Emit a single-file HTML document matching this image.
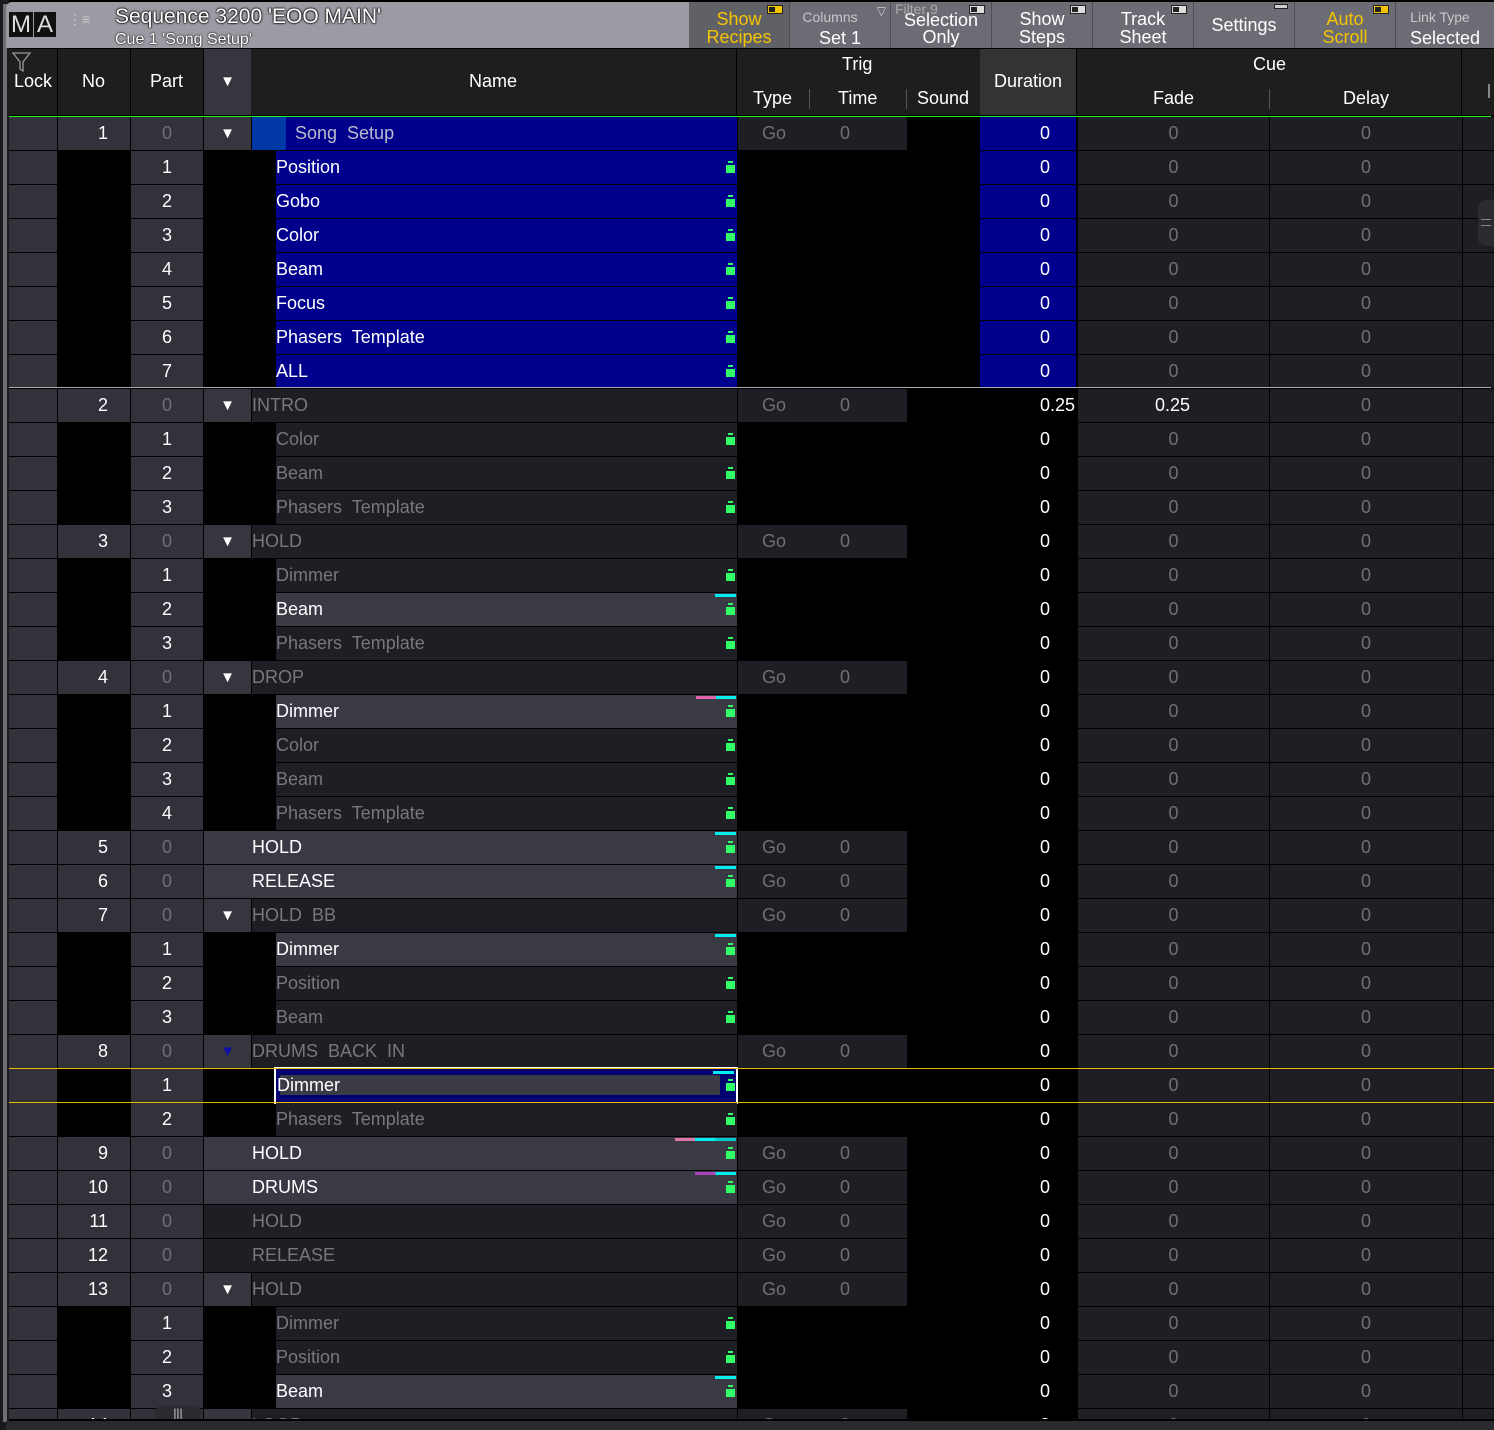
<!DOCTYPE html>
<html><head><meta charset="utf-8"><style>
*{margin:0;padding:0;box-sizing:border-box}
html{width:1494px;height:1430px;overflow:hidden;background:#000}
body{width:1494px;height:1430px;background:#000;position:relative;overflow:hidden;font-family:"Liberation Sans Narrow","Liberation Sans",sans-serif;font-size:18px;color:#fff}
.a{position:absolute}
.r{position:absolute;left:9px;width:1485px;height:33px;overflow:hidden}
.c{position:absolute;top:0;height:33px;line-height:33px;white-space:pre}
.lk{left:0;width:48px;background:#31323a}
.no{left:49px;width:72px;text-align:right;padding-right:22px}
.cu .no{background:#31323a}
.pt{left:122px;width:72px;background:#31323a;text-align:center}
.ar{left:195px;width:47px;text-align:center;background:#35363e;font-size:15px}
.nm{left:243px;width:485px;background:#1e1f24;color:#77787e}
.pn{left:267px;width:461px;background:#1e1f24;color:#77787e}
.nmw{left:195px;width:533px;padding-left:48px;background:#1e1f24;color:#77787e}
.h{background:#393a44!important;color:#fff!important}
.tg{left:729px;width:169px;background:#1e1f24;color:#6f7075}
.tg i{font-style:normal;position:absolute;top:0}
.du{left:971px;width:96px;text-align:right;padding-right:26px}
.bl{background:#00008c}
.fd{left:1069px;width:191px;background:#1e1f24;color:#6f7075;text-align:center}
.dl{left:1261px;width:192px;background:#1e1f24;color:#6f7075;text-align:center}
.rs{left:1454px;width:31px;background:#1e1f24}
.d{color:#6f7075}
.bt{position:absolute;right:2px;top:12px;width:9px;height:10px;background:#3f6;border-top:2px solid #1e1f24}
.bt:before{content:"";position:absolute;left:2px;top:-4px;width:5px;height:2px;background:#3f6}
.cy{position:absolute;right:1px;top:1px;width:21px;height:3px;background:#0ee}
.btn{position:absolute;top:2px;height:46px;background:#6c6d74;text-align:center;line-height:18px;font-size:18px;padding-top:8px}
.sm{font-size:14px;color:#c8c8cc}
.tog{position:absolute;right:6px;top:3px;width:16px;height:9px;border:1px solid #222;background:#ddd}
.tog:after{content:"";position:absolute;left:1px;top:1px;width:6px;height:5px;background:#222}
.hd{position:absolute;color:#fff;font-size:18px}
</style></head><body>
<div class="a" style="left:0;top:0;width:9px;height:1430px;background:#1a1a1e"></div>
<div class="a" style="left:3px;top:4px;width:4px;height:1418px;background:#6e6e75"></div>
<div class="a" style="left:6px;top:2px;width:683px;height:46px;background:#9b9ba3;border-radius:6px 0 0 0"></div>
<div class="a" style="left:9px;top:12px;width:24px;height:25px;background:#111;color:#ddd;font-size:24px;line-height:25px;text-align:center">M</div>
<div class="a" style="left:34px;top:12px;width:22px;height:25px;background:#111;color:#ddd;font-size:24px;line-height:25px;text-align:center">A</div>
<div class="a" style="left:68px;top:17px;color:#ccc;font-size:14px;line-height:5px">⋮≡</div>
<div class="a" style="left:115px;top:5px;font-size:21px;color:#fff;text-shadow:0 0 2px #000,0 0 2px #000,0 0 1px #000">Sequence 3200 'EOO MAIN'</div>
<div class="a" style="left:115px;top:31px;font-size:16px;color:#fff;text-shadow:0 0 2px #000,0 0 1px #000">Cue 1 'Song Setup'</div>
<div class="a" style="left:689px;top:2px;width:805px;height:46px;background:#4e4f55"></div>
<div class="btn" style="left:689px;width:100px;background:#606167;color:#f5c400"><div class="tog" style="background:#f5c400"></div>Show<br>Recipes</div>
<div class="btn" style="left:790px;width:100px;padding-top:5px"><span class="sm" style="margin-left:-20px">Columns</span><br><span style="line-height:24px">Set 1</span><span class="a" style="right:4px;top:0;font-size:12px;color:#ccc">▽</span></div>
<div class="btn" style="left:891px;width:100px;padding-top:10px;line-height:17px"><span class="a sm" style="left:4px;top:-1px;color:#aaa">Filter 9</span><div class="tog"></div>Selection<br>Only</div>
<div class="btn" style="left:992px;width:100px"><div class="tog"></div>Show<br>Steps</div>
<div class="btn" style="left:1093px;width:100px"><div class="tog"></div>Track<br>Sheet</div>
<div class="btn" style="left:1194px;width:100px;padding-top:14px">Settings<span class="a" style="right:6px;top:2px;width:14px;height:5px;border:1px solid #222;background:#ccc"></span></div>
<div class="btn" style="left:1295px;width:100px;color:#f5c400"><div class="tog" style="background:#f5c400"></div>Auto<br>Scroll</div>
<div class="btn" style="left:1396px;width:98px;padding-top:5px"><span class="sm" style="margin-left:-10px">Link Type</span><br><span style="line-height:24px">Selected</span></div>
<div class="a" style="left:9px;top:49px;width:1485px;height:66px;background:#1e1e1e"></div>
<div class="a" style="left:57px;top:49px;width:1px;height:66px;background:#000"></div>
<div class="a" style="left:130px;top:49px;width:1px;height:66px;background:#000"></div>
<div class="a" style="left:203px;top:49px;width:1px;height:66px;background:#000"></div>
<div class="a" style="left:204px;top:49px;width:47px;height:66px;background:#35363e;text-align:center;line-height:66px;font-size:15px">▼</div>
<div class="a" style="left:736px;top:49px;width:1px;height:66px;background:#000"></div>
<div class="a" style="left:980px;top:49px;width:96px;height:66px;background:#333"></div>
<div class="a" style="left:1076px;top:49px;width:1px;height:66px;background:#000"></div>
<div class="a" style="left:1461px;top:49px;width:1px;height:66px;background:#000"></div>
<svg class="a" style="left:11px;top:51px" width="22" height="22"><path d="M2 2 H19 L12 11 V20 L9 18 V11 Z" fill="none" stroke="#999" stroke-width="1.3"/></svg>
<div class="hd" style="left:14px;top:71px">Lock</div>
<div class="hd" style="left:82px;top:71px">No</div>
<div class="hd" style="left:150px;top:71px">Part</div>
<div class="hd" style="left:469px;top:71px">Name</div>
<div class="hd" style="left:842px;top:54px">Trig</div>
<div class="hd" style="left:753px;top:88px">Type</div>
<div class="hd" style="left:838px;top:88px">Time</div>
<div class="hd" style="left:917px;top:88px">Sound</div>
<div class="a" style="left:809px;top:89px;width:1px;height:20px;background:#555"></div>
<div class="a" style="left:906px;top:89px;width:1px;height:20px;background:#555"></div>
<div class="hd" style="left:994px;top:71px">Duration</div>
<div class="hd" style="left:1253px;top:54px">Cue</div>
<div class="hd" style="left:1153px;top:88px">Fade</div>
<div class="hd" style="left:1343px;top:88px">Delay</div>
<div class="a" style="left:1269px;top:89px;width:1px;height:20px;background:#555"></div>
<div class="a" style="left:1488px;top:84px;width:2px;height:14px;background:#888"></div>
<div class="a" style="left:9px;top:116px;width:1482px;height:1px;background:#2e2"></div>

<div class="r cu" style="top:117px"><div class="c lk"></div><div class="c no">1</div><div class="c pt d">0</div><div class="c ar">▼</div><div class="c nm" style="background:#00008c;color:#bbc;padding-left:43px"><span class="a" style="left:0;top:0;width:34px;height:33px;background:#0039a6"></span>Song  Setup</div><div class="c tg"><i style="left:24px">Go</i><i style="left:102px">0</i></div><div class="c du bl">0</div><div class="c fd">0</div><div class="c dl">0</div><div class="c rs"></div></div>
<div class="r" style="top:151px"><div class="c lk"></div><div class="c pt">1</div><div class="c pn" style="background:#00008c;color:#fff">Position<b class="bt" style="border-color:#00008c"></b></div><div class="c du bl">0</div><div class="c fd">0</div><div class="c dl">0</div><div class="c rs"></div></div>
<div class="r" style="top:185px"><div class="c lk"></div><div class="c pt">2</div><div class="c pn" style="background:#00008c;color:#fff">Gobo<b class="bt" style="border-color:#00008c"></b></div><div class="c du bl">0</div><div class="c fd">0</div><div class="c dl">0</div><div class="c rs"></div></div>
<div class="r" style="top:219px"><div class="c lk"></div><div class="c pt">3</div><div class="c pn" style="background:#00008c;color:#fff">Color<b class="bt" style="border-color:#00008c"></b></div><div class="c du bl">0</div><div class="c fd">0</div><div class="c dl">0</div><div class="c rs"></div></div>
<div class="r" style="top:253px"><div class="c lk"></div><div class="c pt">4</div><div class="c pn" style="background:#00008c;color:#fff">Beam<b class="bt" style="border-color:#00008c"></b></div><div class="c du bl">0</div><div class="c fd">0</div><div class="c dl">0</div><div class="c rs"></div></div>
<div class="r" style="top:287px"><div class="c lk"></div><div class="c pt">5</div><div class="c pn" style="background:#00008c;color:#fff">Focus<b class="bt" style="border-color:#00008c"></b></div><div class="c du bl">0</div><div class="c fd">0</div><div class="c dl">0</div><div class="c rs"></div></div>
<div class="r" style="top:321px"><div class="c lk"></div><div class="c pt">6</div><div class="c pn" style="background:#00008c;color:#fff">Phasers  Template<b class="bt" style="border-color:#00008c"></b></div><div class="c du bl">0</div><div class="c fd">0</div><div class="c dl">0</div><div class="c rs"></div></div>
<div class="r" style="top:355px"><div class="c lk"></div><div class="c pt">7</div><div class="c pn" style="background:#00008c;color:#fff">ALL<b class="bt" style="border-color:#00008c"></b></div><div class="c du bl">0</div><div class="c fd">0</div><div class="c dl">0</div><div class="c rs"></div></div>
<div class="a" style="left:9px;top:387px;width:1482px;height:1px;background:#aaa"></div>

<div class="r cu" style="top:389px"><div class="c lk"></div><div class="c no">2</div><div class="c pt d">0</div><div class="c ar">▼</div><div class="c nm">INTRO</div><div class="c tg"><i style="left:24px">Go</i><i style="left:102px">0</i></div><div class="c du" style="padding-right:1px">0.25</div><div class="c fd" style="color:#fff;text-align:left;padding-left:77px">0.25</div><div class="c dl">0</div><div class="c rs"></div></div>
<div class="r" style="top:423px"><div class="c lk"></div><div class="c pt">1</div><div class="c pn">Color<b class="bt"></b></div><div class="c du">0</div><div class="c fd">0</div><div class="c dl">0</div><div class="c rs"></div></div>
<div class="r" style="top:457px"><div class="c lk"></div><div class="c pt">2</div><div class="c pn">Beam<b class="bt"></b></div><div class="c du">0</div><div class="c fd">0</div><div class="c dl">0</div><div class="c rs"></div></div>
<div class="r" style="top:491px"><div class="c lk"></div><div class="c pt">3</div><div class="c pn">Phasers  Template<b class="bt"></b></div><div class="c du">0</div><div class="c fd">0</div><div class="c dl">0</div><div class="c rs"></div></div>

<div class="r cu" style="top:525px"><div class="c lk"></div><div class="c no">3</div><div class="c pt d">0</div><div class="c ar">▼</div><div class="c nm">HOLD</div><div class="c tg"><i style="left:24px">Go</i><i style="left:102px">0</i></div><div class="c du">0</div><div class="c fd">0</div><div class="c dl">0</div><div class="c rs"></div></div>
<div class="r" style="top:559px"><div class="c lk"></div><div class="c pt">1</div><div class="c pn">Dimmer<b class="bt"></b></div><div class="c du">0</div><div class="c fd">0</div><div class="c dl">0</div><div class="c rs"></div></div>
<div class="r" style="top:593px"><div class="c lk"></div><div class="c pt">2</div><div class="c pn h">Beam<b class="cy"></b><b class="bt" style="border-color:#393a44"></b></div><div class="c du">0</div><div class="c fd">0</div><div class="c dl">0</div><div class="c rs"></div></div>
<div class="r" style="top:627px"><div class="c lk"></div><div class="c pt">3</div><div class="c pn">Phasers  Template<b class="bt"></b></div><div class="c du">0</div><div class="c fd">0</div><div class="c dl">0</div><div class="c rs"></div></div>

<div class="r cu" style="top:661px"><div class="c lk"></div><div class="c no">4</div><div class="c pt d">0</div><div class="c ar">▼</div><div class="c nm">DROP</div><div class="c tg"><i style="left:24px">Go</i><i style="left:102px">0</i></div><div class="c du">0</div><div class="c fd">0</div><div class="c dl">0</div><div class="c rs"></div></div>
<div class="r" style="top:695px"><div class="c lk"></div><div class="c pt">1</div><div class="c pn h">Dimmer<b class="cy" style="width:40px;background:linear-gradient(90deg,#d6a 0 50%,#0ee 50%)"></b><b class="bt" style="border-color:#393a44"></b></div><div class="c du">0</div><div class="c fd">0</div><div class="c dl">0</div><div class="c rs"></div></div>
<div class="r" style="top:729px"><div class="c lk"></div><div class="c pt">2</div><div class="c pn">Color<b class="bt"></b></div><div class="c du">0</div><div class="c fd">0</div><div class="c dl">0</div><div class="c rs"></div></div>
<div class="r" style="top:763px"><div class="c lk"></div><div class="c pt">3</div><div class="c pn">Beam<b class="bt"></b></div><div class="c du">0</div><div class="c fd">0</div><div class="c dl">0</div><div class="c rs"></div></div>
<div class="r" style="top:797px"><div class="c lk"></div><div class="c pt">4</div><div class="c pn">Phasers  Template<b class="bt"></b></div><div class="c du">0</div><div class="c fd">0</div><div class="c dl">0</div><div class="c rs"></div></div>

<div class="r cu" style="top:831px"><div class="c lk"></div><div class="c no">5</div><div class="c pt d">0</div><div class="c nmw h">HOLD<b class="cy"></b><b class="bt" style="border-color:#393a44"></b></div><div class="c tg"><i style="left:24px">Go</i><i style="left:102px">0</i></div><div class="c du">0</div><div class="c fd">0</div><div class="c dl">0</div><div class="c rs"></div></div>
<div class="r cu" style="top:865px"><div class="c lk"></div><div class="c no">6</div><div class="c pt d">0</div><div class="c nmw h">RELEASE<b class="cy"></b><b class="bt" style="border-color:#393a44"></b></div><div class="c tg"><i style="left:24px">Go</i><i style="left:102px">0</i></div><div class="c du">0</div><div class="c fd">0</div><div class="c dl">0</div><div class="c rs"></div></div>
<div class="r cu" style="top:899px"><div class="c lk"></div><div class="c no">7</div><div class="c pt d">0</div><div class="c ar">▼</div><div class="c nm">HOLD  BB</div><div class="c tg"><i style="left:24px">Go</i><i style="left:102px">0</i></div><div class="c du">0</div><div class="c fd">0</div><div class="c dl">0</div><div class="c rs"></div></div>
<div class="r" style="top:933px"><div class="c lk"></div><div class="c pt">1</div><div class="c pn h">Dimmer<b class="cy"></b><b class="bt" style="border-color:#393a44"></b></div><div class="c du">0</div><div class="c fd">0</div><div class="c dl">0</div><div class="c rs"></div></div>
<div class="r" style="top:967px"><div class="c lk"></div><div class="c pt">2</div><div class="c pn">Position<b class="bt"></b></div><div class="c du">0</div><div class="c fd">0</div><div class="c dl">0</div><div class="c rs"></div></div>
<div class="r" style="top:1001px"><div class="c lk"></div><div class="c pt">3</div><div class="c pn">Beam<b class="bt"></b></div><div class="c du">0</div><div class="c fd">0</div><div class="c dl">0</div><div class="c rs"></div></div>

<div class="r cu" style="top:1035px"><div class="c lk"></div><div class="c no">8</div><div class="c pt d">0</div><div class="c ar" style="color:#11a">▼</div><div class="c nm">DRUMS  BACK  IN</div><div class="c tg"><i style="left:24px">Go</i><i style="left:102px">0</i></div><div class="c du">0</div><div class="c fd">0</div><div class="c dl">0</div><div class="c rs"></div></div>
<div class="r" style="top:1069px"><div class="c lk"></div><div class="c pt">1</div><div class="c du">0</div><div class="c fd">0</div><div class="c dl">0</div><div class="c rs"></div></div>
<div class="a" style="left:274px;top:1067px;width:464px;height:37px;border:2px solid #fff;background:#000070"><div class="a" style="left:4px;top:6px;width:440px;height:20px;background:#3a3b44"></div><span class="a" style="left:1px;top:0;line-height:33px;color:#fff">Dimmer</span><b class="cy" style="top:2px;right:2px"></b><b class="bt" style="border-color:#000070;top:12px;right:1px"></b></div>
<div class="a" style="left:9px;top:1068px;width:1485px;height:1px;background:#e6b800"></div>
<div class="a" style="left:9px;top:1102px;width:1485px;height:1px;background:#e6b800"></div>
<div class="r" style="top:1103px"><div class="c lk"></div><div class="c pt">2</div><div class="c pn">Phasers  Template<b class="bt"></b></div><div class="c du">0</div><div class="c fd">0</div><div class="c dl">0</div><div class="c rs"></div></div>

<div class="r cu" style="top:1137px"><div class="c lk"></div><div class="c no">9</div><div class="c pt d">0</div><div class="c nmw h">HOLD<b class="cy" style="width:61px;background:linear-gradient(90deg,#d7a 0 33%,#0ee 33% 66%,#0cc 66%)"></b><b class="bt" style="border-color:#393a44"></b></div><div class="c tg"><i style="left:24px">Go</i><i style="left:102px">0</i></div><div class="c du">0</div><div class="c fd">0</div><div class="c dl">0</div><div class="c rs"></div></div>
<div class="r cu" style="top:1171px"><div class="c lk"></div><div class="c no">10</div><div class="c pt d">0</div><div class="c nmw h">DRUMS<b class="cy" style="width:41px;background:linear-gradient(90deg,#a4b 0 50%,#0ee 50%)"></b><b class="bt" style="border-color:#393a44"></b></div><div class="c tg"><i style="left:24px">Go</i><i style="left:102px">0</i></div><div class="c du">0</div><div class="c fd">0</div><div class="c dl">0</div><div class="c rs"></div></div>
<div class="r cu" style="top:1205px"><div class="c lk"></div><div class="c no">11</div><div class="c pt d">0</div><div class="c nmw">HOLD</div><div class="c tg"><i style="left:24px">Go</i><i style="left:102px">0</i></div><div class="c du">0</div><div class="c fd">0</div><div class="c dl">0</div><div class="c rs"></div></div>
<div class="r cu" style="top:1239px"><div class="c lk"></div><div class="c no">12</div><div class="c pt d">0</div><div class="c nmw">RELEASE</div><div class="c tg"><i style="left:24px">Go</i><i style="left:102px">0</i></div><div class="c du">0</div><div class="c fd">0</div><div class="c dl">0</div><div class="c rs"></div></div>
<div class="r cu" style="top:1273px"><div class="c lk"></div><div class="c no">13</div><div class="c pt d">0</div><div class="c ar">▼</div><div class="c nm">HOLD</div><div class="c tg"><i style="left:24px">Go</i><i style="left:102px">0</i></div><div class="c du">0</div><div class="c fd">0</div><div class="c dl">0</div><div class="c rs"></div></div>
<div class="r" style="top:1307px"><div class="c lk"></div><div class="c pt">1</div><div class="c pn">Dimmer<b class="bt"></b></div><div class="c du">0</div><div class="c fd">0</div><div class="c dl">0</div><div class="c rs"></div></div>
<div class="r" style="top:1341px"><div class="c lk"></div><div class="c pt">2</div><div class="c pn">Position<b class="bt"></b></div><div class="c du">0</div><div class="c fd">0</div><div class="c dl">0</div><div class="c rs"></div></div>
<div class="r" style="top:1375px"><div class="c lk"></div><div class="c pt">3</div><div class="c pn h">Beam<b class="cy"></b><b class="bt" style="border-color:#393a44"></b></div><div class="c du">0</div><div class="c fd">0</div><div class="c dl">0</div><div class="c rs"></div></div>
<div class="r cu" style="top:1409px;height:10px"><div class="c lk"></div><div class="c no">14</div><div class="c pt d">0</div><div class="c ar">▼</div><div class="c nm">LOOP</div><div class="c tg"><i style="left:24px">Go</i><i style="left:102px">0</i></div><div class="c du">0</div><div class="c fd">0</div><div class="c dl">0</div><div class="c rs"></div></div>
<div class="a" style="left:1478px;top:200px;width:16px;height:46px;background:#2a2b30;border-radius:8px 0 0 8px"></div>
<div class="a" style="left:1481px;top:219px;width:10px;height:7px;border-top:1px solid #888;border-bottom:1px solid #888"></div>
<div class="a" style="left:155px;top:1406px;width:46px;height:14px;background:#2a2b30;border-radius:6px 6px 0 0;color:#ccc;font-size:12px;text-align:center;line-height:14px">|||</div>
<div class="a" style="left:9px;top:1419px;width:1485px;height:2px;background:#000"></div>
<div class="a" style="left:6px;top:1421px;width:1488px;height:9px;background:#2a2a2e"></div>
</body></html>
